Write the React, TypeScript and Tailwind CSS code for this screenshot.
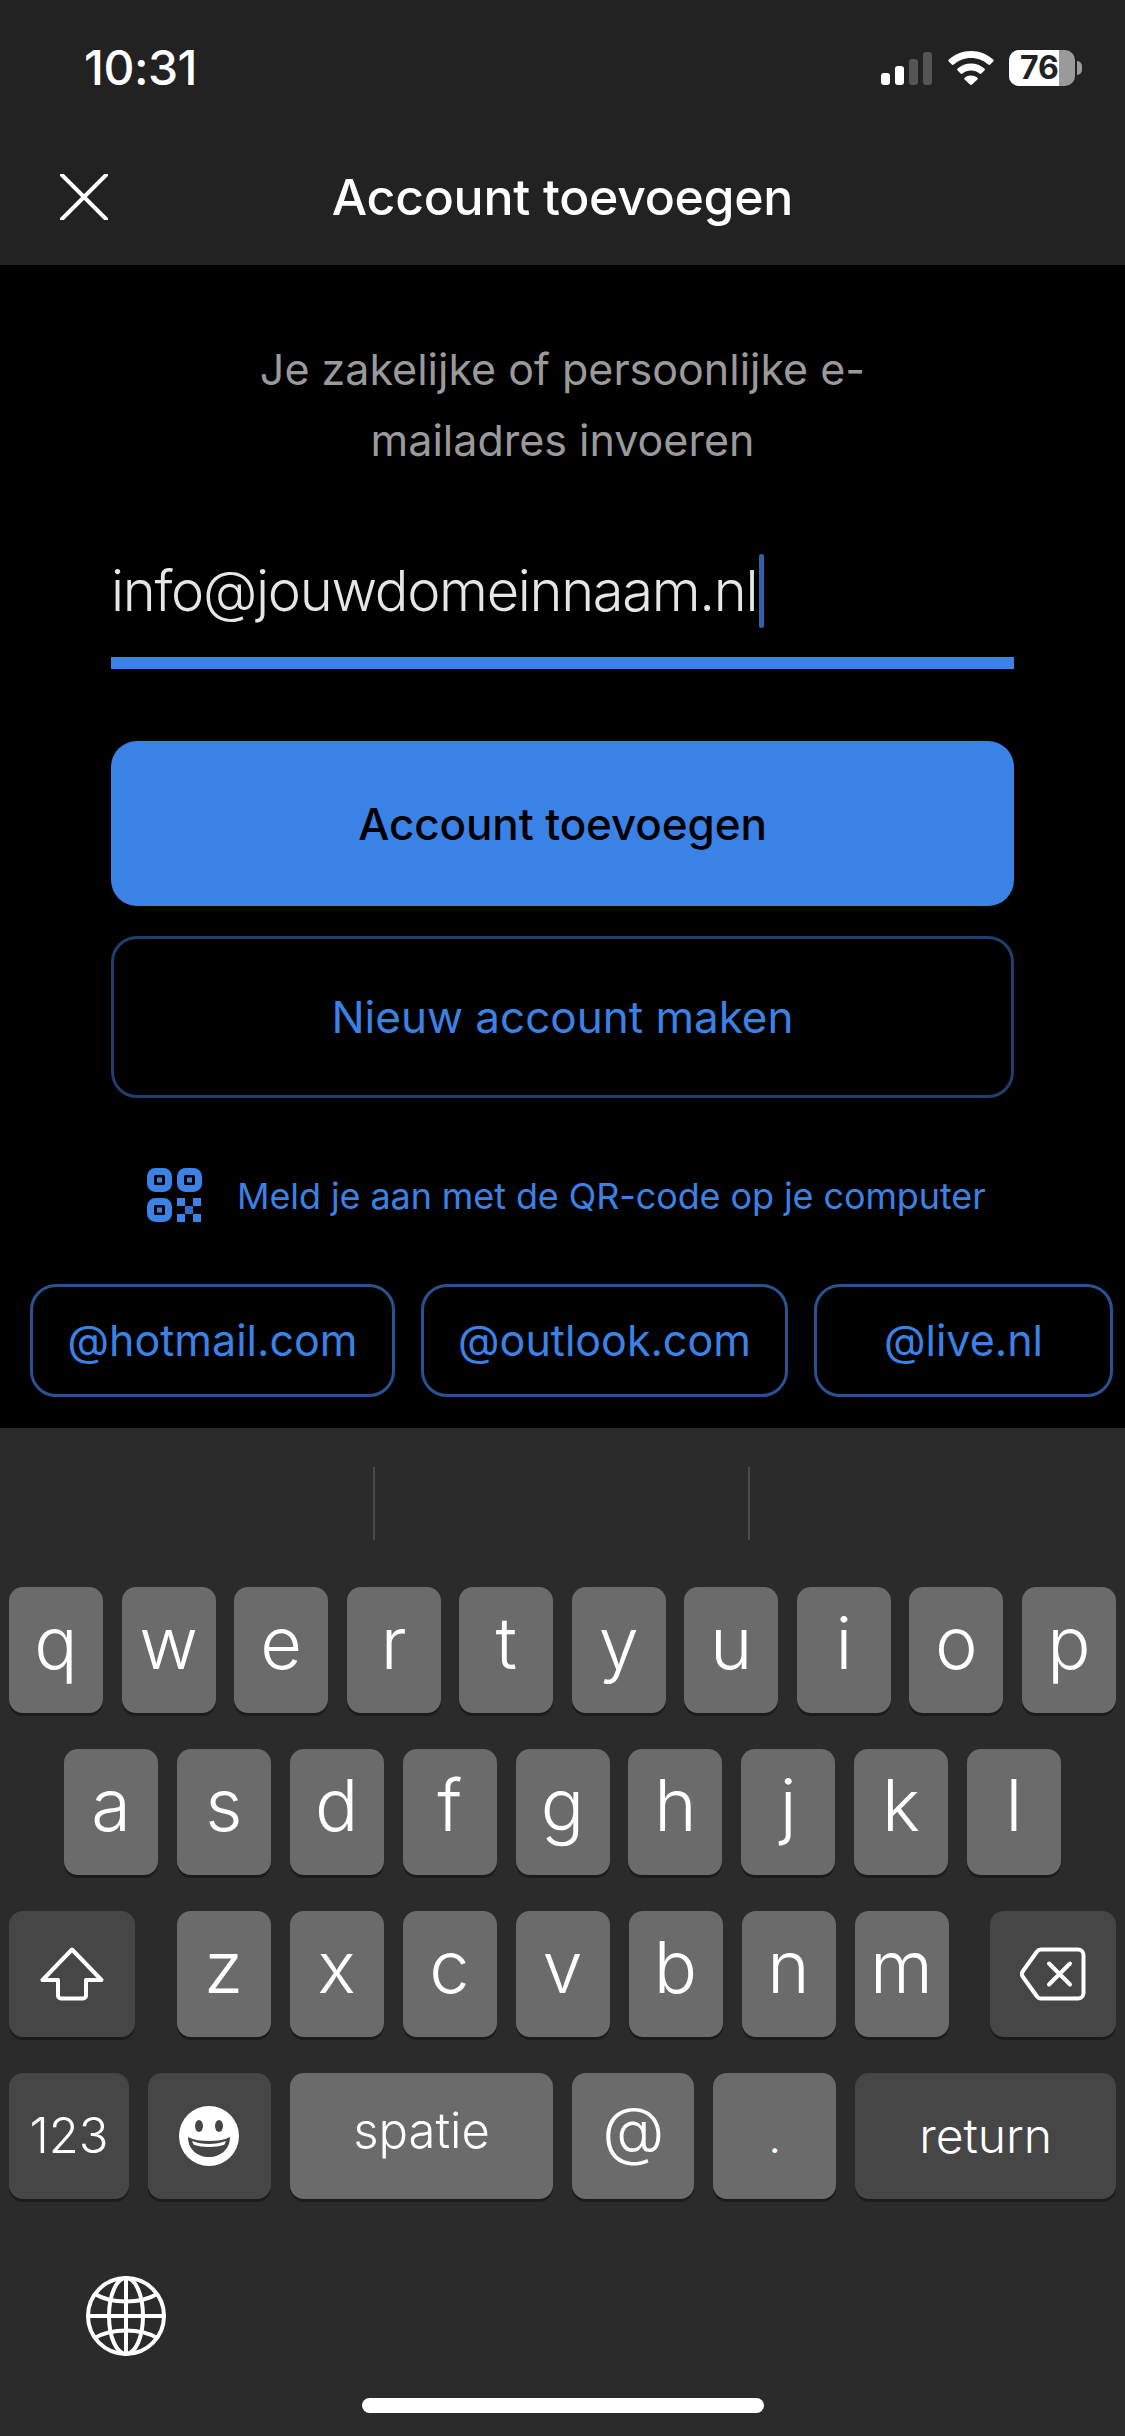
const row1 = ["q", "w", "e", "r", "t", "y", "u", "i", "o", "p"];
const row2 = ["a", "s", "d", "f", "g", "h", "j", "k", "l"];
const row3 = ["z", "x", "c", "v", "b", "n", "m"];

const LetterKey = ({ label }: { label: string }) => (
  <div className="flex h-[126px] w-[94px] items-center justify-center rounded-[14px] bg-[#6b6b6b] pb-[14px] text-[72px] leading-none font-light text-white shadow-[0_3px_0_#1c1c1c]">
    {label}
  </div>
);

const SignalIcon = () => (
  <svg width="52" height="33" viewBox="0 0 52 33" fill="none">
    <rect x="0" y="21" width="9" height="12" rx="3" fill="#fff" />
    <rect x="14" y="14" width="9" height="19" rx="3" fill="#fff" />
    <rect x="28" y="7" width="9" height="26" rx="3" fill="#555" />
    <rect x="42" y="0" width="9" height="33" rx="3" fill="#555" />
  </svg>
);

const WifiIcon = () => (
  <svg width="46" height="34" viewBox="0 0 46 34" fill="#fff">
    <path d="M23 0C14.5 0 6.7 3.2.8 8.6c-.6.5-.6 1.400 0 2l3 3c.5.5 1.300.5 1.900 0C10.300 9.500 16.300 7 23 7s12.700 2.500 17.300 6.600c.6.5 1.400.5 1.900 0l3-3c.6-.6.6-1.500 0-2C39.300 3.200 31.500 0 23 0z" />
    <path d="M23 12.500c-5.100 0-9.800 1.900-13.400 5-.6.500-.6 1.400 0 2l3 3c.5.500 1.300.500 1.900.1 2.300-1.900 5.300-3 8.500-3s6.200 1.100 8.500 3c.6.400 1.400.4 1.900-.1l3-3c.6-.6.6-1.500 0-2-3.600-3.100-8.300-5-13.400-5z" />
    <path d="M23 24.500c-2.400 0-4.600.8-6.300 2.200-.6.500-.6 1.400-.1 1.900l5.400 5c.6.500 1.400.500 2 0l5.400-5c.5-.5.500-1.400-.1-1.900-1.700-1.400-3.900-2.200-6.300-2.200z" />
  </svg>
);

const QrIcon = () => (
  <svg width="56" height="56" viewBox="0 0 56 56" fill="none">
    <rect x="3.500" y="3.500" width="18" height="17" rx="5" stroke="#3b82e6" strokeWidth="7" />
    <rect x="33.500" y="3.500" width="18" height="17" rx="5" stroke="#3b82e6" strokeWidth="7" />
    <rect x="3.500" y="33.500" width="18" height="17" rx="5" stroke="#3b82e6" strokeWidth="7" />
    <rect x="10" y="9.500" width="5" height="5" fill="#3b82e6" />
    <rect x="40" y="9.500" width="5" height="5" fill="#3b82e6" />
    <rect x="10" y="39.500" width="5" height="5" fill="#3b82e6" />
    <rect x="30" y="30" width="8" height="8" fill="#3b82e6" />
    <rect x="46" y="30" width="8" height="8" fill="#3b82e6" />
    <rect x="38" y="38" width="8" height="8" fill="#2f6fc8" />
    <rect x="30" y="46" width="8" height="8" fill="#3b82e6" />
    <rect x="46" y="46" width="8" height="8" fill="#3b82e6" />
  </svg>
);

const ShiftIcon = () => (
  <svg width="64" height="54" viewBox="0 0 64 54" fill="none">
    <path d="M32 2.500 2.500 33H18v15.500c0 1.700 1.300 3 3 3h22c1.700 0 3-1.300 3-3V33h15.500z" stroke="#fff" strokeWidth="4" strokeLinejoin="round" />
  </svg>
);

const DeleteIcon = () => (
  <svg width="66" height="54" viewBox="0 0 66 54" fill="none">
    <path d="M21 2.500h37c3 0 5.500 2.500 5.500 5.500v38c0 3-2.500 5.500-5.500 5.500H21c-1.500 0-3-.7-4-2L3 30c-1.300-1.800-1.300-4.200 0-6L17 4.500c1-1.300 2.500-2 4-2z" stroke="#fff" strokeWidth="4" strokeLinejoin="round" />
    <path d="M29 16.500 50 37.500M50 16.500 29 37.500" stroke="#fff" strokeWidth="4" strokeLinecap="round" />
  </svg>
);

const EmojiIcon = () => (
  <svg width="60" height="60" viewBox="0 0 60 60">
    <circle cx="30" cy="30" r="30" fill="#fff" />
    <ellipse cx="20" cy="20" rx="4" ry="6" fill="#464646" />
    <ellipse cx="40" cy="20" rx="4" ry="6" fill="#464646" />
    <path d="M9 31c6 3 13 4 21 4s15-1 21-4c0 12-9 20-21 20S9 43 9 31z" fill="#464646" />
    <path d="M13 35c5 2 11 3 17 3s12-1 17-3c-.5 1.500-1 2.500-1.800 3.800-4.500 1.500-9.700 2.200-15.200 2.200s-10.700-.7-15.200-2.200C14 37.500 13.500 36.500 13 35z" fill="#fff" />
  </svg>
);

const GlobeIcon = () => (
  <svg width="80" height="80" viewBox="0 0 80 80" fill="none" stroke="#fff" strokeWidth="4">
    <circle cx="40" cy="40" r="38" />
    <ellipse cx="40" cy="40" rx="17" ry="38" />
    <path d="M40 2v76M2 40h76" />
    <path d="M9 18c8 5 19 7.500 31 7.500S63 23 71 18M9 62c8-5 19-7.500 31-7.500S63 57 71 62" />
  </svg>
);

export default function App() {
  return (
    <div className="flex h-[2436px] w-[1125px] flex-col overflow-hidden bg-black font-['Inter',sans-serif] text-white">
      <div className="h-[265px] bg-[#222222]">
        <div className="flex h-[136px] items-center justify-between pr-[43px] pl-[84px]">
          <span className="text-[48px] font-medium tracking-[-0.5px]">10:31</span>
          <div className="flex items-center">
            <SignalIcon />
            <div className="ml-[15px]">
              <WifiIcon />
            </div>
            <div className="relative ml-[15px] h-[36px] w-[66px] rounded-[10px] bg-[#9a9a9a]">
              <div className="h-full w-[50px] rounded-l-[10px] bg-white" />
              <span className="absolute top-[2px] left-[11px] text-[32px] leading-[32px] font-bold text-[#222222]">76</span>
            </div>
            <div className="ml-[2px] h-[14px] w-[5px] rounded-r-full bg-[#9a9a9a]" />
          </div>
        </div>
        <div className="relative flex h-[122px] items-center justify-center">
          <svg className="absolute top-[38px] left-[60px]" width="48" height="46" viewBox="0 0 48 46" fill="none">
            <path d="M2 1 46 45M46 1 2 45" stroke="#fff" strokeWidth="4" strokeLinecap="round" />
          </svg>
          <span className="text-[50px] font-medium tracking-[-0.3px]">Account toevoegen</span>
        </div>
      </div>

      <div className="flex h-[1163px] flex-col items-center">
        <p className="mt-[69px] w-[700px] text-center text-[43px] leading-[71px] text-[#9a9a9a]">
          Je zakelijke of persoonlijke e-
          <br />
          mailadres invoeren
        </p>
        <div className="mt-[78px] flex h-[115px] w-[903px] items-start border-b-[12px] border-[#3b82e6]">
          <span className="mt-[9px] text-[56px] leading-none font-light tracking-[-1.3px] text-[#e6e6e6]">info@jouwdomeinnaam.nl</span>
          <span className="ml-[2px] h-[74px] w-[5px] rounded-full bg-[#2e62ad]" />
        </div>
        <button className="mt-[72px] h-[165px] w-[903px] rounded-[26px] bg-[#3b82e6] text-[44px] font-medium tracking-[-0.1px] text-black">
          Account toevoegen
        </button>
        <button className="mt-[30px] h-[162px] w-[903px] rounded-[26px] border-[3px] border-[#1f3f6e] text-[44px] text-[#3b82e6]">
          Nieuw account maken
        </button>
        <div className="mt-[70px] flex w-full items-center gap-[34px] pl-[147px]">
          <QrIcon />
          <span className="text-[36px] tracking-[-0.1px] text-[#3b82e6]">Meld je aan met de QR-code op je computer</span>
        </div>
        <div className="mt-[60px] flex w-full gap-[26px] pl-[30px] text-[43px] text-[#3b82e6]">
          <div className="flex h-[113px] w-[365px] items-center justify-center rounded-[26px] border-[3px] border-[#285390]">@hotmail.com</div>
          <div className="flex h-[113px] w-[367px] items-center justify-center rounded-[26px] border-[3px] border-[#285390]">@outlook.com</div>
          <div className="flex h-[113px] w-[299px] items-center justify-center rounded-[26px] border-[3px] border-[#285390]">@live.nl</div>
        </div>
      </div>

      <div className="flex flex-1 flex-col bg-[#2b2b2b] px-[9px]">
        <div className="flex h-[159px] items-center pb-[9px] pl-[364px]">
          <div className="h-[73px] w-[2px] bg-[#4a4a4a]" />
          <div className="ml-[373px] h-[73px] w-[2px] bg-[#4a4a4a]" />
        </div>
        <div className="flex justify-between">
          {row1.map((k) => (
            <LetterKey key={k} label={k} />
          ))}
        </div>
        <div className="mt-[36px] flex justify-between px-[55px]">
          {row2.map((k) => (
            <LetterKey key={k} label={k} />
          ))}
        </div>
        <div className="mt-[36px] flex justify-between">
          <div className="flex h-[126px] w-[126px] items-center justify-center rounded-[14px] bg-[#464646] shadow-[0_3px_0_#1c1c1c]">
            <ShiftIcon />
          </div>
          <div className="flex gap-[19px]">
            {row3.map((k) => (
              <LetterKey key={k} label={k} />
            ))}
          </div>
          <div className="flex h-[126px] w-[126px] items-center justify-center rounded-[14px] bg-[#464646] shadow-[0_3px_0_#1c1c1c]">
            <DeleteIcon />
          </div>
        </div>
        <div className="mt-[36px] flex gap-[19px]">
          <div className="flex h-[126px] w-[120px] items-center justify-center rounded-[14px] bg-[#464646] text-[49px] font-light shadow-[0_3px_0_#1c1c1c]">
            123
          </div>
          <div className="flex h-[126px] w-[123px] items-center justify-center rounded-[14px] bg-[#464646] shadow-[0_3px_0_#1c1c1c]">
            <EmojiIcon />
          </div>
          <div className="flex h-[126px] w-[264px] items-center justify-center rounded-[14px] bg-[#6b6b6b] pb-[10px] text-[49px] font-light shadow-[0_3px_0_#1c1c1c]">
            spatie
          </div>
          <div className="flex h-[126px] w-[122px] items-center justify-center rounded-[14px] bg-[#6b6b6b] pb-[12px] text-[64px] font-light shadow-[0_3px_0_#1c1c1c]">
            @
          </div>
          <div className="flex h-[126px] w-[123px] items-center justify-center rounded-[14px] bg-[#6b6b6b] text-[46px] font-light shadow-[0_3px_0_#1c1c1c]">
            .
          </div>
          <div className="flex h-[126px] w-[261px] items-center justify-center rounded-[14px] bg-[#464646] text-[48px] font-light shadow-[0_3px_0_#1c1c1c]">
            return
          </div>
        </div>
        <div className="mt-[77px] ml-[77px]">
          <GlobeIcon />
        </div>
        <div className="mt-[42px] h-[15px] w-[402px] self-center rounded-full bg-white" />
      </div>
    </div>
  );
}
